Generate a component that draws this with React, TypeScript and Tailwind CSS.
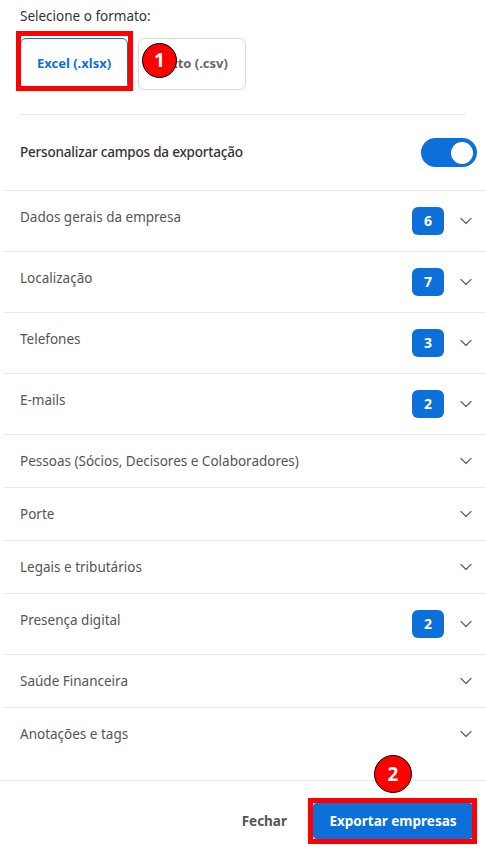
import React from 'react';
import { ChevronDown } from 'lucide-react';

const sections = [
  { name: 'Dados gerais da empresa', count: 6 },
  { name: 'Localização', count: 7 },
  { name: 'Telefones', count: 3 },
  { name: 'E-mails', count: 2 },
  { name: 'Pessoas (Sócios, Decisores e Colaboradores)' },
  { name: 'Porte' },
  { name: 'Legais e tributários' },
  { name: 'Presença digital', count: 2 },
  { name: 'Saúde Financeira' },
  { name: 'Anotações e tags' },
];

const StepBadge = ({ n, className }: { n: number; className: string }) => (
  <div
    className={`absolute flex items-center justify-center rounded-full bg-[#ff0000] border border-black text-white font-bold text-[19px] leading-none ${className}`}
  >
    {n}
  </div>
);

const App = () => {
  return (
    <div className="relative w-[486px] h-[854px] bg-white overflow-hidden font-['Noto_Sans',sans-serif]">
      {/* formato */}
      <div className="px-5 pt-[6px]">
        <p className="text-[13.5px] leading-5 text-[#333]">Selecione o formato:</p>
        <div className="flex gap-[10px] mt-3 pb-6 border-b border-[#e8e8e8]">
          <button className="w-[108px] h-[52px] rounded-md border border-[#0d6fd9] bg-white text-[13px] font-bold text-[#0d6fd9]">
            Excel (.xlsx)
          </button>
          <button className="w-[108px] h-[52px] rounded-md border border-[#d8d8d8] bg-white text-[13px] font-bold text-[#666]">
            Texto (.csv)
          </button>
        </div>
      </div>

      <div className="flex items-center justify-between pl-5 pr-[9px] h-[75px]">
        <span className="text-[13.5px] font-medium tracking-[-0.2px] text-[#333]">Personalizar campos da exportação</span>
        <div className="w-14 h-[29px] rounded-full bg-[#0d6fd9] flex items-center justify-end pr-1">
          <div className="w-[22px] h-[22px] rounded-full bg-white" />
        </div>
      </div>

      {/* campos */}
      <div className="ml-1 pb-5">
        {sections.map((s, i) => (
          <div
            key={i}
            className="flex items-start justify-between pl-4 pr-[10px] pt-4 pb-4 border-t border-[#e8e8e8]"
          >
            <span className="text-[13.5px] leading-5 text-[#555]">{s.name}</span>
            <div className="flex items-center gap-3">
              {s.count && (
                <span className="w-8 h-7 rounded-md bg-[#0d6fd9] text-white text-sm font-bold flex items-center justify-center">
                  {s.count}
                </span>
              )}
              <ChevronDown size={20} strokeWidth={1.5} className="text-[#666]" />
            </div>
          </div>
        ))}
      </div>

      {/* rodapé */}
      <div className="flex items-center justify-end gap-[26px] border-t border-[#e8e8e8] pt-[22px] pr-[13px]">
        <button className="text-[13.5px] font-bold text-[#555]">Fechar</button>
        <button className="w-40 h-9 rounded bg-[#0d6fd9] text-white text-[13.5px] font-bold">
          Exportar empresas
        </button>
      </div>

      {/* anotações */}
      <div className="absolute left-4 top-[31px] w-[117px] h-[60px] border-[5px] border-[#ff0000]" />
      <StepBadge n={1} className="left-[142px] top-[43px] w-[35px] h-[35px]" />
      <div className="absolute left-[308px] top-[798px] w-[169px] h-[46px] border-[5px] border-[#ff0000]" />
      <StepBadge n={2} className="left-[374px] top-[755px] w-[38px] h-[38px]" />
    </div>
  );
};

export default App;
